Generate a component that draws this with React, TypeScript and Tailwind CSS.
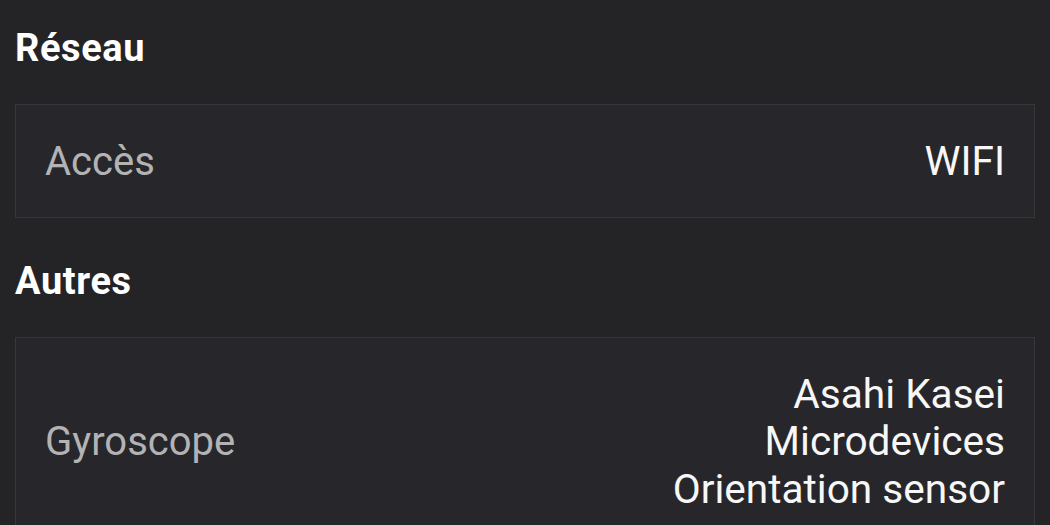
import React from "react";

interface RowProps {
  label: string;
  value: string[];
}

const Row: React.FC<RowProps> = ({ label, value }) => (
  <div className="flex items-center justify-between border border-[#37373b] bg-[#27272b] px-[29px] pt-[33px] pb-[31px]">
    <span className="text-[40px] leading-[47px] text-[#b3b3b5]">{label}</span>
    <div className="flex flex-col items-end text-right text-[40.6px] leading-[47.5px] text-[#f7f7f7]">
      {value.map((line, idx) => (
        <span key={idx}>{line}</span>
      ))}
    </div>
  </div>
);

const Section: React.FC<{ title: string; children: React.ReactNode }> = ({
  title,
  children,
}) => (
  <section className="mb-[41px]">
    <h2 className="mb-[34px] text-[38px] font-bold leading-[44px] tracking-[0.6px] text-white">
      {title}
    </h2>
    {children}
  </section>
);

export default function App() {
  return (
    <div
      className="h-[525px] w-[1050px] overflow-hidden bg-[#242427] px-[15px] pt-[26px]"
      style={{ fontFamily: "Roboto, 'Noto Sans', sans-serif" }}
    >
      <Section title="Réseau">
        <Row label="Accès" value={["WIFI"]} />
      </Section>
      <Section title="Autres">
        <Row
          label="Gyroscope"
          value={["Asahi Kasei", "Microdevices", "Orientation sensor"]}
        />
      </Section>
    </div>
  );
}
